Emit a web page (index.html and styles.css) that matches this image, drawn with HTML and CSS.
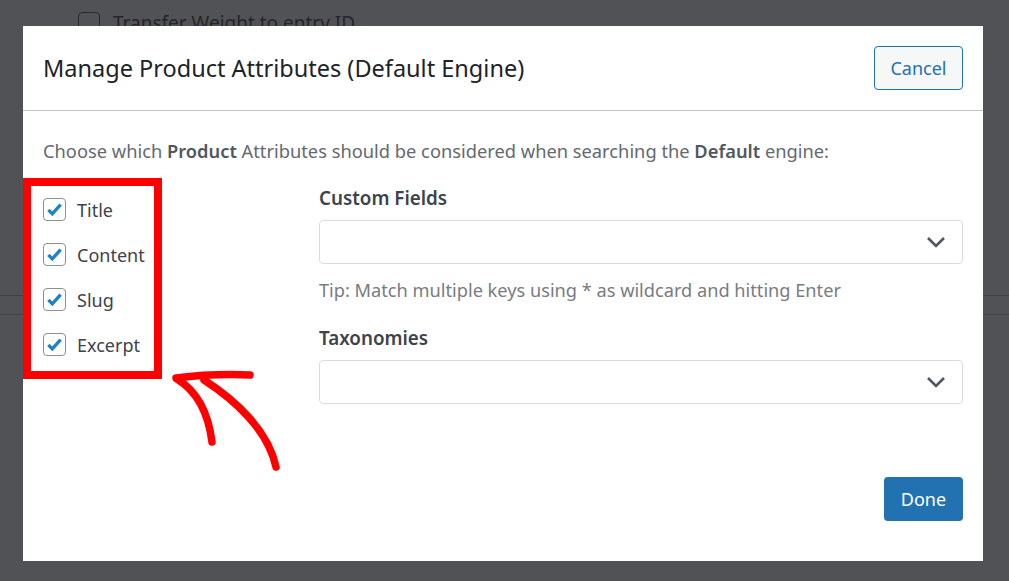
FILE: index.html
```html
<!DOCTYPE html>
<html lang="en">
<head>
  <meta charset="UTF-8" />
  <meta name="viewport" content="width=device-width, initial-scale=1.0"/>
  <title>Manage Product Attributes</title>
  <link rel="stylesheet" href="styles.css">
</head>
<body>

  <!-- Page behind the overlay -->
  <div class="backdrop">
    <div class="behind-row">
      <span class="behind-box"></span>
      <span>Transfer Weight to entry ID</span>
    </div>
    <div class="behind-band"></div>
  </div>

  <div class="modal">
    <header class="modal-header">
      <h2>Manage Product Attributes (Default Engine)</h2>
      <button class="btn-cancel">Cancel</button>
    </header>

    <div class="modal-body">
      <p class="intro">Choose which <strong>Product</strong> Attributes should be considered when searching the <strong>Default</strong> engine:</p>

      <div class="columns">
        <ul class="attrs">
          <li><span class="check"><svg viewBox="0 0 24 24"><path d="M5 12.5l4.5 4.5L19 6.5"/></svg></span>Title</li>
          <li><span class="check"><svg viewBox="0 0 24 24"><path d="M5 12.5l4.5 4.5L19 6.5"/></svg></span>Content</li>
          <li><span class="check"><svg viewBox="0 0 24 24"><path d="M5 12.5l4.5 4.5L19 6.5"/></svg></span>Slug</li>
          <li><span class="check"><svg viewBox="0 0 24 24"><path d="M5 12.5l4.5 4.5L19 6.5"/></svg></span>Excerpt</li>
        </ul>

        <div class="fields">
          <label class="field-label">Custom Fields</label>
          <div class="select-box">
            <svg class="chevron" viewBox="0 0 20 12"><path d="M2 2l8 8 8-8"/></svg>
          </div>
          <p class="tip">Tip: Match multiple keys using * as wildcard and hitting Enter</p>

          <label class="field-label taxonomies">Taxonomies</label>
          <div class="select-box">
            <svg class="chevron" viewBox="0 0 20 12"><path d="M2 2l8 8 8-8"/></svg>
          </div>
        </div>
      </div>

      <div class="modal-footer">
        <button class="btn-done">Done</button>
      </div>
    </div>
  </div>

  <!-- Hand drawn arrow annotation -->
  <svg class="arrow" width="120" height="110" viewBox="0 0 120 110">
    <path d="M26 18 C50 15 75 14 100 15"/>
    <path d="M27 19 C45 30 58 50 62 82"/>
    <path d="M54 20 C85 40 118 70 126 107"/>
  </svg>

</body>
</html>
```

FILE: styles.css
```css
body {
  margin: 0;
  padding: 0;
  width: 1009px;
  height: 581px;
  overflow: hidden;
  background-color: #515256;
  font-family: "Noto Sans", "Open Sans", sans-serif;
  position: relative;
}

/* Faint page behind the overlay */
.backdrop {
  position: absolute;
  top: 0;
  left: 0;
  right: 0;
  bottom: 0;
}

.behind-row {
  display: flex;
  align-items: center;
  gap: 13px;
  padding: 10px 0 0 78px;
  font-size: 19px;
  color: #242527;
}

.behind-box {
  width: 20px;
  height: 20px;
  border: 1px solid #2a2b2d;
  border-radius: 4px;
}

.behind-band {
  margin-top: 259px;
  height: 18px;
  border-top: 1px solid #414245;
  border-bottom: 1px solid #414245;
}

/* Modal */
.modal {
  position: absolute;
  top: 26px;
  left: 23px;
  width: 960px;
  height: 535px;
  background: white;
  color: #3c434a;
}

.modal-header {
  height: 84px;
  display: flex;
  align-items: center;
  justify-content: space-between;
  padding: 0 20px;
  border-bottom: 1px solid #c3c4c7;
}

.modal-header h2 {
  margin: 0;
  font-size: 23.5px;
  font-weight: 400;
  color: #1d2327;
}

button {
  font-family: inherit;
  font-size: 18px;
  height: 44px;
  border-radius: 4px;
  cursor: pointer;
}

.btn-cancel {
  width: 89px;
  background: #f6f7f7;
  border: 1px solid #2271b1;
  color: #2271b1;
}

.modal-body {
  padding: 27px 20px 0 20px;
}

.intro {
  margin: 0;
  font-size: 18.3px;
  line-height: 26px;
  color: #646970;
}

.intro strong {
  color: #50575e;
  font-weight: 600;
}

.columns {
  display: flex;
  gap: 157px;
  margin-top: 14px;
}

/* Red highlight around the attribute list */
.attrs {
  list-style: none;
  margin: 0 0 0 -20px;
  padding: 12px 0 0 12px;
  width: 139px;
  height: 201px;
  box-sizing: border-box;
  border: 8px solid #ff0000;
}

.attrs li {
  display: flex;
  align-items: center;
  gap: 11px;
  height: 23px;
  margin-bottom: 22px;
  font-size: 18px;
  color: #3c434a;
}

.check {
  width: 23px;
  height: 23px;
  box-sizing: border-box;
  border: 1px solid #8c8f94;
  border-radius: 4px;
  display: flex;
  align-items: center;
  justify-content: center;
  flex-shrink: 0;
}

.check svg {
  width: 21px;
  height: 21px;
  fill: none;
  stroke: #1c83c6;
  stroke-width: 3.8;
}

.fields {
  flex: 1;
  padding-top: 8px;
}

.field-label {
  display: block;
  font-size: 18.8px;
  line-height: 24px;
  font-weight: 600;
  color: #3c434a;
}

.taxonomies {
  margin-top: 24px;
}

.select-box {
  margin-top: 10px;
  height: 44px;
  box-sizing: border-box;
  border: 1px solid #dcdcde;
  border-radius: 4px;
  display: flex;
  align-items: center;
  justify-content: flex-end;
  padding-right: 16px;
}

.chevron {
  width: 20px;
  height: 12px;
  fill: none;
  stroke: #50575e;
  stroke-width: 2.6;
}

.tip {
  margin: 14px 0 0;
  font-size: 18.2px;
  line-height: 24px;
  color: #787c82;
}

.modal-footer {
  display: flex;
  justify-content: flex-end;
  margin-top: 73px;
}

.btn-done {
  width: 79px;
  background: #2271b1;
  border: none;
  color: white;
}

.arrow {
  position: absolute;
  left: 150px;
  top: 360px;
  overflow: visible;
  fill: none;
  stroke: #ff0000;
  stroke-width: 7.5;
  stroke-linecap: round;
}
```
